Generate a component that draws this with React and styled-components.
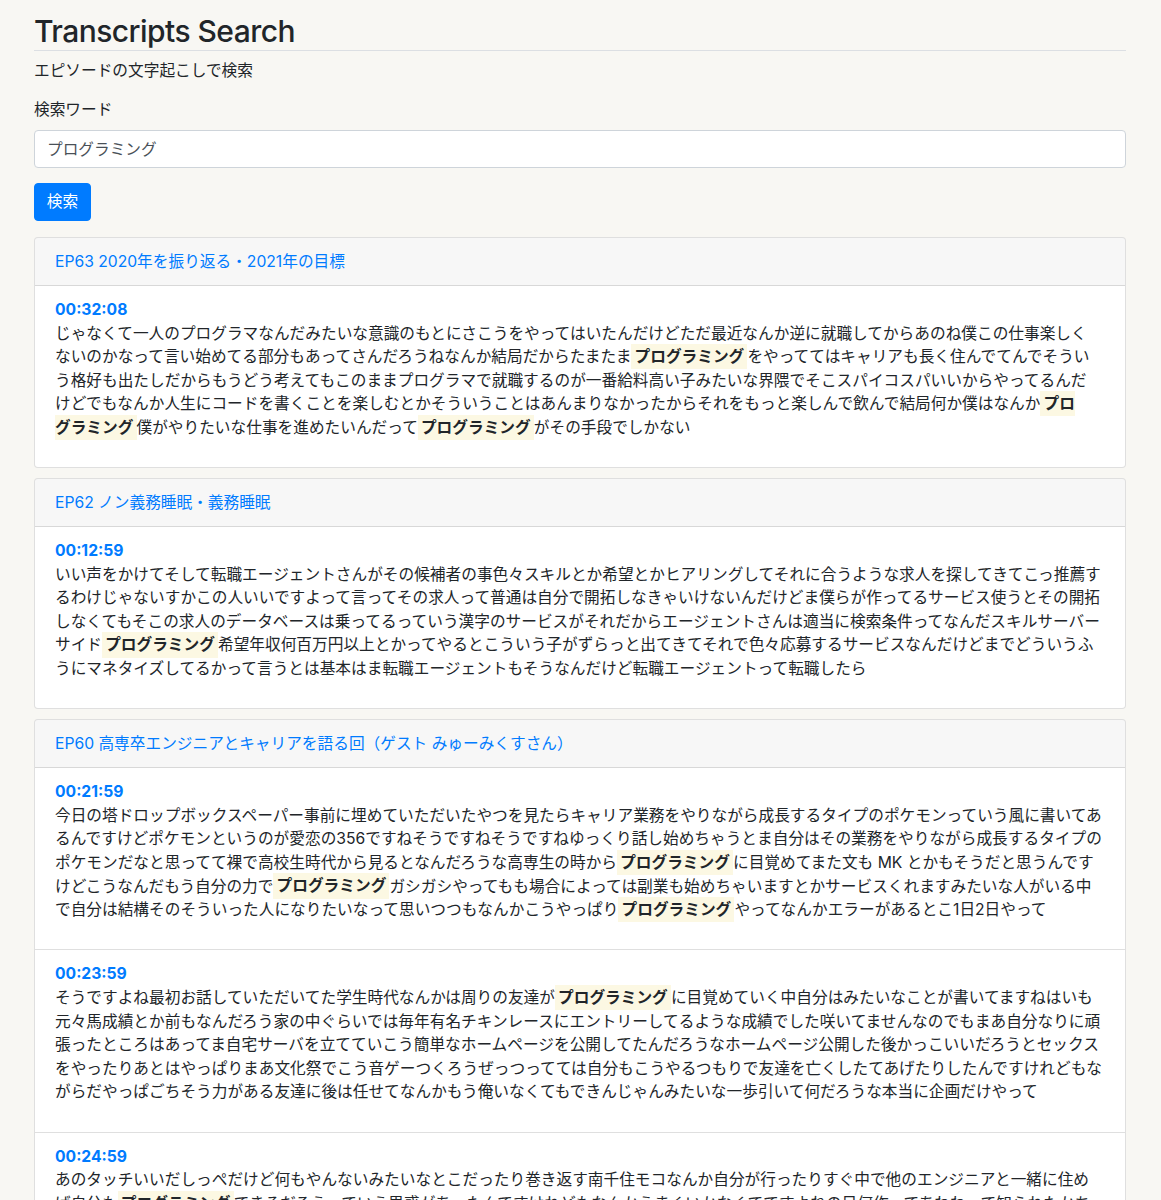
import React from "react";
import styled, { createGlobalStyle } from "styled-components";

const GlobalStyle = createGlobalStyle`
  html, body {
    margin: 0;
    padding: 0;
    background: #f8f7f3;
  }
  body {
    font-family: Inter, "Noto Sans CJK JP", sans-serif;
    color: #212529;
    font-size: 15.68px;
    line-height: 23.5px;
  }
  * { box-sizing: border-box; }
`;

const Page = styled.div`
  padding: 13px 35px 40px 34px;
`;

const Title = styled.h1`
  margin: 0;
  font-size: 30px;
  line-height: 37px;
  font-weight: 500;
  letter-spacing: -0.55px;
  color: #212529;
  border-bottom: 1px solid #dcdfe3;
`;

const Subtitle = styled.p`
  margin: 7.5px 0 0;
`;

const Form = styled.form`
  display: flex;
  flex-direction: column;
  align-items: flex-start;
  margin-top: 16px;
`;

const Label = styled.label`
  display: block;
`;

const Input = styled.input`
  margin-top: 8.5px;
  width: 100%;
  height: 37.5px;
  padding: 0 12px;
  border: 1px solid #ced4da;
  border-radius: 4px;
  background: #fff;
  color: #495057;
  font: inherit;
  outline: none;
`;

const Button = styled.button`
  margin-top: 15.5px;
  width: 57px;
  height: 37.5px;
  border: 1px solid #007bff;
  border-radius: 4px;
  background: #007bff;
  color: #fff;
  font: inherit;
  padding: 0;
`;

const Results = styled.div`
  margin-top: 16.5px;
  display: flex;
  flex-direction: column;
  gap: 10px;
`;

const Card = styled.section`
  background: #fff;
  border: 1px solid rgba(0, 0, 0, 0.125);
  border-radius: 4px;
  overflow: hidden;
`;

const CardHeader = styled.header`
  height: 48px;
  display: flex;
  align-items: center;
  padding: 0 20px;
  background: rgba(0, 0, 0, 0.03);
  border-bottom: 1px solid rgba(0, 0, 0, 0.125);
`;

const EpisodeLink = styled.a`
  color: #007bff;
  text-decoration: none;
`;

const Entry = styled.div`
  padding: 12px 20px 12px;
  & + & {
    border-top: 1px solid rgba(0, 0, 0, 0.125);
  }
`;

const Timestamp = styled.a`
  display: block;
  color: #007bff;
  font-weight: 700;
  text-decoration: none;
`;

const Transcript = styled.p`
  margin: 0 0 15.7px;
  line-height: 23.6px;
`;

const Mark = styled.mark`
  background: #fcf8e3;
  color: #212529;
  font-weight: 700;
  padding: 0.2em;
`;

const data = [
  {
    title: "EP63 2020年を振り返る・2021年の目標",
    entries: [
      {
        time: "00:32:08",
        text: "じゃなくて一人のプログラマなんだみたいな意識のもとにさこうをやってはいたんだけどただ最近なんか逆に就職してからあのね僕この仕事楽しく|ないのかなって言い始めてる部分もあってさんだろうねなんか結局だからたまたま[プログラミング]をやっててはキャリアも長く住んでてんでそうい|う格好も出たしだからもうどう考えてもこのままプログラマで就職するのが一番給料高い子みたいな界隈でそこスパイコスパいいからやってるんだ|けどでもなんか人生にコードを書くことを楽しむとかそういうことはあんまりなかったからそれをもっと楽しんで飲んで結局何か僕はなんか[プロ|グラミング]僕がやりたいな仕事を進めたいんだって[プログラミング]がその手段でしかない",
      },
    ],
  },
  {
    title: "EP62 ノン義務睡眠・義務睡眠",
    entries: [
      {
        time: "00:12:59",
        text: "いい声をかけてそして転職エージェントさんがその候補者の事色々スキルとか希望とかヒアリングしてそれに合うような求人を探してきてこっ推薦するわけじゃないすかこの人いいですよって言ってその求人って普通は自分で開拓しなきゃいけないんだけどま僕らが作ってるサービス使うとその開拓しなくてもそこの求人のデータベースは乗ってるっていう漢字のサービスがそれだからエージェントさんは適当に検索条件ってなんだスキルサーバーサイド[プログラミング]希望年収何百万円以上とかってやるとこういう子がずらっと出てきてそれで色々応募するサービスなんだけどまでどういうふうにマネタイズしてるかって言うとは基本はま転職エージェントもそうなんだけど転職エージェントって転職したら",
      },
    ],
  },
  {
    title: "EP60 高専卒エンジニアとキャリアを語る回（ゲスト みゅーみくすさん）",
    entries: [
      {
        time: "00:21:59",
        text: "今日の塔ドロップボックスペーパー事前に埋めていただいたやつを見たらキャリア業務をやりながら成長するタイプのポケモンっていう風に書いてあるんですけどポケモンというのが愛恋の356ですねそうですねそうですねゆっくり話し始めちゃうとま自分はその業務をやりながら成長するタイプのポケモンだなと思ってて裸で高校生時代から見るとなんだろうな高専生の時から[プログラミング]に目覚めてまた文も MK とかもそうだと思うんですけどこうなんだもう自分の力で[プログラミング]ガシガシやってもも場合によっては副業も始めちゃいますとかサービスくれますみたいな人がいる中で自分は結構そのそういった人になりたいなって思いつつもなんかこうやっぱり[プログラミング]やってなんかエラーがあるとこ1日2日やって",
      },
      {
        time: "00:23:59",
        text: "そうですよね最初お話していただいてた学生時代なんかは周りの友達が[プログラミング]に目覚めていく中自分はみたいなことが書いてますねはいも元々馬成績とか前もなんだろう家の中ぐらいでは毎年有名チキンレースにエントリーしてるような成績でした咲いてませんなのでもまあ自分なりに頑張ったところはあってま自宅サーバを立てていこう簡単なホームページを公開してたんだろうなホームページ公開した後かっこいいだろうとセックスをやったりあとはやっぱりまあ文化祭でこう音ゲーつくろうぜっつってては自分もこうやるつもりで友達を亡くしたてあげたりしたんですけれどもながらだやっぱごちそう力がある友達に後は任せてなんかもう俺いなくてもできんじゃんみたいな一歩引いて何だろうな本当に企画だけやって",
      },
      {
        time: "00:24:59",
        text: "あのタッチいいだしっぺだけど何もやんないみたいなとこだったり巻き返す南千住モコなんか自分が行ったりすぐ中で他のエンジニアと一緒に住め|ば自分も[プログラミング]できるだろうっていう思惑があったんですけれどもなんかうまくいかなくてですよねの日何作ってあわわって知られたかち小声部か|なって思ってたんですけどやっぱりそこからもうちょっと頑張ろうと思って",
      },
    ],
  },
];

function withBreaks(s, keyBase) {
  const out = [];
  s.split("|").forEach((p, j) => {
    if (j > 0) out.push(<br key={`${keyBase}-br-${j}`} />);
    out.push(<React.Fragment key={`${keyBase}-t-${j}`}>{p}</React.Fragment>);
  });
  return out;
}

function renderText(text) {
  return text.split(/(\[[^\]]*\])/).map((part, i) =>
    part.startsWith("[") ? (
      <Mark key={i}>{withBreaks(part.slice(1, -1), i)}</Mark>
    ) : (
      <React.Fragment key={i}>{withBreaks(part, i)}</React.Fragment>
    )
  );
}

export default function App() {
  return (
    <>
      <GlobalStyle />
      <Page>
        <Title>Transcripts Search</Title>
        <Subtitle>エピソードの文字起こしで検索</Subtitle>
        <Form onSubmit={(e) => e.preventDefault()}>
          <Label htmlFor="q">検索ワード</Label>
          <Input id="q" defaultValue="プログラミング" />
          <Button type="submit">検索</Button>
        </Form>
        <Results>
          {data.map((ep) => (
            <Card key={ep.title}>
              <CardHeader>
                <EpisodeLink href="#">{ep.title}</EpisodeLink>
              </CardHeader>
              {ep.entries.map((en) => (
                <Entry key={en.time}>
                  <Timestamp href="#">{en.time}</Timestamp>
                  <Transcript>{renderText(en.text)}</Transcript>
                </Entry>
              ))}
            </Card>
          ))}
        </Results>
      </Page>
    </>
  );
}
